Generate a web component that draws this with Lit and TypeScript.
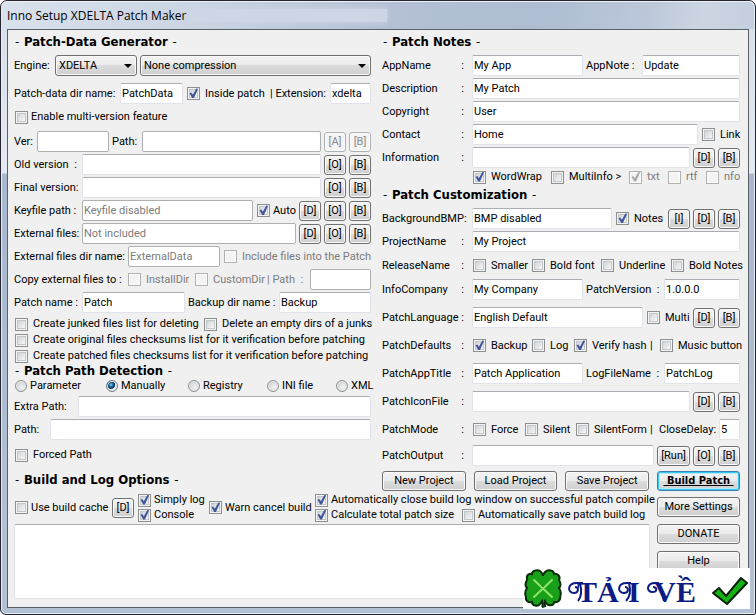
import { LitElement, html, css, nothing } from "lit";
import { customElement } from "lit/decorators.js";

interface Opts {
  on?: boolean;
  off?: boolean;
}

const check = (text: string, o: Opts = {}) => html`<label class="check ${o.off ? "dim" : ""}"
  ><input type="checkbox" .checked=${!!o.on} ?disabled=${!!o.off} /><span>${text}</span></label
>`;

const radio = (text: string, on = false) => html`<label class="check radio"
  ><input type="radio" name="detection" .checked=${on} /><span>${text}</span></label
>`;

const label = (id: string, text: string, dim = false) =>
  html`<label class="label ${dim ? "dim" : ""}" for=${id}>${text}</label>`;

const key = (text: string, id?: string) =>
  id
    ? html`<label class="key" for=${id}><span>${text}</span><span>:</span></label>`
    : html`<span class="key"><span>${text}</span><span>:</span></span>`;

const field = (id: string, value = "", off = false) =>
  html`<input class="field" type="text" id=${id} .value=${value} ?disabled=${off} />`;

const btn = (text: string, off = false) =>
  html`<button class="btn" type="button" ?disabled=${off}>${text}</button>`;

const heading = (text: string) => html`<h2>- <b>${text}</b> -</h2>`;

const select = (id: string, value: string, aria?: string) => html`<span class="select"
  ><select id=${id} aria-label=${aria ?? nothing}>
    <option>${value}</option>
  </select></span
>`;

@customElement("app-root")
export class AppRoot extends LitElement {
  static styles = css`
    :host {
      display: block;
      font: 11px/14px Roboto, "DejaVu Sans Condensed", sans-serif;
      color: #000;
    }
    * {
      box-sizing: border-box;
    }
    .window {
      position: relative;
      min-height: 100vh;
      display: flex;
      flex-direction: column;
      padding: 0 6px 6px;
      border: 1px solid #26242e;
      border-radius: 7px 7px 2px 6px;
      background: linear-gradient(#d6deea 0, #e4e9f1 172px, #a9b8cf 173px, #b4c1d5 100%);
      box-shadow: inset 0 0 0 1px #e6ecf4;
    }
    .title {
      height: 28px;
      margin: 0 -5px;
      padding: 0 5px;
      display: flex;
      align-items: center;
      border-top: 1px solid #eef2f7;
      border-radius: 6px 6px 0 0;
      background: linear-gradient(100deg, #d9e1ec 0, #cbd5e3 25%, #b3c0d5 52%, #aebdd3 72%, #bcc8da 86%, #cdd5e2 93%, #c3cede 100%);
    }
    h1 {
      margin: 0;
      font: 12px/16px "Open Sans", "Noto Sans", sans-serif;
      white-space: nowrap;
    }
    .smudge {
      width: 198px;
      height: 13px;
      margin-left: 2px;
      background: #ccd6e4;
      box-shadow: 0 0 6px #ccd6e4;
    }
    .client {
      flex: 1;
      display: flex;
      flex-direction: column;
      gap: 0;
      padding: 5px 8px 8px 6px;
      border: 1px solid #5a6066;
      background: #f0f0f0;
    }
    .columns {
      display: grid;
      grid-template-columns: 357fr 358fr;
      column-gap: 11px;
    }
    .col {
      min-width: 0;
      display: flex;
      flex-direction: column;
    }
    h2 {
      margin: 0;
      padding-left: 1px;
      font: 13px/14px "DejaVu Sans Condensed", "DejaVu Sans", sans-serif;
      white-space: nowrap;
    }
    h2 b {
      padding: 0 1px;
    }
    .row {
      display: grid;
      column-gap: 3px;
      height: 23px;
      align-items: center;
    }
    .slim {
      height: 16px;
    }
    .t1 { margin-top: 1px; }
    .t2 { margin-top: 2px; }
    .t3 { margin-top: 3px; }
    .t4 { margin-top: 4px; }
    .t5 { margin-top: 5px; }
    .t6 { margin-top: 6px; }
    .t10 { margin-top: 10px; }

    .engine { grid-template-columns: 38px 82px 1fr; }
    .data { grid-template-columns: 103px 63px 81px 1fr 41px; }
    .ver { grid-template-columns: 20px 72px 27px 1fr 22px 22px; }
    .path2 { grid-template-columns: 65px 1fr 22px 22px; }
    .keyfile { grid-template-columns: 65px 1fr 40px 22px 22px 22px; }
    .path3 { grid-template-columns: 65px 1fr 22px 22px 22px; }
    .extdir { grid-template-columns: 111px 92px 1fr; }
    .copy { grid-template-columns: 110px 64px 70px 1fr 61px; }
    .name { grid-template-columns: 65px 103px 1fr 92px; }
    .junk { grid-template-columns: 186px 1fr; }
    .radios { grid-template-columns: 88px 79px 76px 66px 1fr; }
    .extra { grid-template-columns: 61px 1fr; }
    .path { grid-template-columns: 33px 1fr; }

    .app { grid-template-columns: 87px 1fr 53px 98px; }
    .wide { grid-template-columns: 87px 1fr; }
    .contact { grid-template-columns: 87px 1fr 39px; }
    .info { grid-template-columns: 87px 1fr 22px 22px; }
    .wrap { grid-template-columns: 87px 75px 75px 36px 35px 1fr; }
    .bmp { grid-template-columns: 87px 1fr 50px 22px 22px 22px; }
    .release { grid-template-columns: 87px 56px 66px 67px 1fr; }
    .pair { grid-template-columns: 87px 1fr 75px 76px; }
    .lang { grid-template-columns: 87px 1fr 44px 22px 22px; }
    .defaults { grid-template-columns: 87px 56px 39px 74px 6px 1fr; }
    .mode { grid-template-columns: 87px 49px 48px 72px 6px 57px 1fr; }
    .output { grid-template-columns: 87px 1fr 33px 22px 22px; }
    .actions { grid-template-columns: repeat(3, 1fr) 83px; column-gap: 8px; }

    .label, .key, .check {
      white-space: pre;
      min-width: 0;
    }
    .key {
      display: flex;
      justify-content: space-between;
      padding-right: 5px;
    }
    .check {
      display: flex;
      align-items: center;
      gap: 5px;
      padding-left: 1px;
    }
    .tight .check, .radio, .keyfile .check {
      gap: 3px;
    }
    .dim {
      color: #7b7b7b;
    }
    .check input {
      appearance: none;
      flex: none;
      width: 13px;
      height: 13px;
      margin: 0;
      border: 1px solid #8e8f8f;
      background: linear-gradient(135deg, #c4c9d0, #f6f6f6 80%);
      box-shadow: inset 0 0 0 1px #f4f4f4, inset 0 0 0 2px #c3c6ca;
    }
    .check input:disabled {
      border-color: #b1b1b1;
      background: #f4f4f4;
      box-shadow: inset 0 0 0 1px #fbfbfb;
    }
    .check input[type="checkbox"]:checked::before {
      content: "";
      display: block;
      width: 11px;
      height: 11px;
      background: #42569a;
      clip-path: polygon(14% 48%, 30% 42%, 44% 62%, 76% 4%, 92% 6%, 54% 92%, 38% 92%);
    }
    .check input:disabled:checked::before {
      background: #a9a9a9;
    }
    .check.radio input {
      width: 12px;
      height: 12px;
      border-radius: 50%;
      background: radial-gradient(circle at 60% 60%, #f4f4f4 0, #c6c9cd 80%);
      box-shadow: inset 0 0 0 1px #f0f0f0;
    }
    .check.radio input:checked {
      border-color: #6f7c88;
      background: radial-gradient(circle at 40% 38%, #8fd8f5 0, #1d6ea8 22%, #0d2f56 42%, #dfe6ec 52%);
    }
    .field {
      width: 100%;
      min-width: 0;
      height: 21px;
      margin: 0;
      padding: 0 1px;
      border: 1px solid #e2e3ea;
      border-top-color: #abadb3;
      border-radius: 2px;
      background: #fff;
      font: inherit;
      color: #000;
      outline: none;
    }
    .field:disabled {
      border-color: #afafaf;
      color: #7b7b7b;
    }
    .btn, select {
      font: inherit;
      color: #000;
      border: 1px solid #707070;
      border-radius: 3px;
      background: linear-gradient(#f3f3f3, #ebebeb 49%, #dcdcdc 50%, #cfcfcf);
      box-shadow: inset 0 0 0 1px #fafafa;
    }
    .btn {
      width: 100%;
      height: 20px;
      margin: 0;
      padding: 0;
      white-space: nowrap;
    }
    .btn:disabled {
      color: #8a8a8a;
      border-color: #adb2b5;
      background: #f4f4f4;
    }
    .btn.primary {
      font-family: "DejaVu Sans Condensed", "DejaVu Sans", sans-serif;
      font-weight: 700;
      text-decoration: underline;
      white-space: pre;
      border-color: #3c7fb1;
      box-shadow: inset 0 0 0 1px #35c8f2, inset 0 0 0 2px #b8e8f6;
    }
    .select {
      position: relative;
      display: block;
    }
    .select::after {
      content: "";
      position: absolute;
      right: 5px;
      top: 9px;
      border: 4px solid transparent;
      border-top-color: #000;
      border-bottom-width: 0;
      pointer-events: none;
    }
    select {
      appearance: none;
      display: block;
      width: 100%;
      height: 21px;
      margin: 0;
      padding: 0 3px;
    }
    .lower {
      flex: 1;
      display: grid;
      grid-template-columns: 1fr 83px;
      column-gap: 7px;
    }
    .log {
      min-width: 0;
      display: flex;
      flex-direction: column;
      gap: 1px;
    }
    .options {
      display: grid;
      grid-template-columns: 95px 22px 68px 103px 1fr;
      column-gap: 3px;
      align-items: center;
      height: 31px;
    }
    .stack {
      display: grid;
      grid-auto-rows: 15px;
      align-items: center;
    }
    .options .check {
      gap: 3px;
    }
    .total {
      display: grid;
      grid-template-columns: 144px 1fr;
      column-gap: 3px;
    }
    textarea {
      flex: 1;
      width: 100%;
      min-height: 75px;
      margin: 0;
      padding: 2px;
      border: 1px solid #e2e3ea;
      border-top-color: #abadb3;
      border-radius: 2px;
      background: #fff;
      font: inherit;
      resize: none;
      outline: none;
    }
    .side {
      display: flex;
      flex-direction: column;
      gap: 7px;
      padding-top: 5px;
    }
    .stamp {
      position: absolute;
      right: 5px;
      bottom: 5px;
      width: 227px;
      height: 41px;
      background: #fff;
    }
    .stamp svg {
      display: block;
    }
    .stamp text {
      font: 700 30px "Liberation Serif", serif;
      fill: #0c1c84;
    }
  `;

  render() {
    return html`
      <div class="window">
        <header class="title">
          <h1>Inno Setup XDELTA Patch Maker</h1>
          <span class="smudge"></span>
        </header>
        <main class="client">
          <div class="columns">
            <section class="col">
              ${heading("Patch-Data Generator")}
              <div class="row t5 engine">
                ${label("engine", "Engine:")}${select("engine", "XDELTA")}${select("comp", "None compression", "Compression")}
              </div>
              <div class="row t5 data">
                ${label("dir", "Patch-data dir name:")}${field("dir", "PatchData")}${check("Inside patch", { on: true })}${label("ext", "| Extension:")}${field("ext", "xdelta")}
              </div>
              <div class="row slim t4 tight">${check("Enable multi-version feature")}</div>
              <div class="row t5 ver">
                ${label("ver", "Ver:")}${field("ver", "", true)}${label("vpath", "Path:")}${field("vpath", "", true)}${btn("[A]", true)}${btn("[B]", true)}
              </div>
              <div class="row path2">${label("old", "Old version  :")}${field("old")}${btn("[O]")}${btn("[B]")}</div>
              <div class="row path2">${label("final", "Final version:")}${field("final")}${btn("[O]")}${btn("[B]")}</div>
              <div class="row keyfile">
                ${label("keyfile", "Keyfile path :")}${field("keyfile", "Keyfile disabled", true)}${check("Auto", { on: true })}${btn("[D]")}${btn("[O]")}${btn("[B]")}
              </div>
              <div class="row path3">
                ${label("files", "External files:")}${field("files", "Not included", true)}${btn("[D]")}${btn("[O]")}${btn("[B]")}
              </div>
              <div class="row extdir">
                ${label("extdir", "External files dir name:")}${field("extdir", "ExternalData", true)}${check("Include files into the Patch", { off: true })}
              </div>
              <div class="row copy">
                <span class="label">Copy external files to :</span>${check("InstallDir", { off: true })}${check("CustomDir", { off: true })}${label("cpath", "| Path  :", true)}${field("cpath", "", true)}
              </div>
              <div class="row name">
                ${label("pname", "Patch name :")}${field("pname", "Patch")}${label("bname", "Backup dir name :")}${field("bname", "Backup")}
              </div>
              <div class="row slim t2 junk">
                ${check("Create junked files list for deleting")}${check("Delete an empty dirs of a junks")}
              </div>
              <div class="row slim">${check("Create original files checksums list for it verification before patching")}</div>
              <div class="row slim">${check("Create patched files checksums list for it verification before patching")}</div>
              ${heading("Patch Path Detection")}
              <div class="row slim radios">
                ${radio("Parameter")}${radio("Manually", true)}${radio("Registry")}${radio("INI file")}${radio("XML")}
              </div>
              <div class="row t1 extra">${label("extra", "Extra Path:")}${field("extra")}</div>
              <div class="row path">${label("path", "Path:")}${field("path")}</div>
              <div class="row slim t6">${check("Forced Path")}</div>
              <div class="t10">${heading("Build and Log Options")}</div>
            </section>
            <section class="col">
              ${heading("Patch Notes")}
              <div class="row t5 app">
                ${key("AppName", "app")}${field("app", "My App")}${label("note", "AppNote :")}${field("note", "Update")}
              </div>
              <div class="row wide">${key("Description", "desc")}${field("desc", "My Patch")}</div>
              <div class="row wide">${key("Copyright", "copy")}${field("copy", "User")}</div>
              <div class="row contact">${key("Contact", "contact")}${field("contact", "Home")}${check("Link")}</div>
              <div class="row info">${key("Information", "info")}${field("info")}${btn("[D]")}${btn("[B]")}</div>
              <div class="row slim wrap">
                <span></span>${check("WordWrap", { on: true })}${check("MultiInfo >")}${check("txt", { on: true, off: true })}${check("rtf", { off: true })}${check("nfo", { off: true })}
              </div>
              <div class="t3">${heading("Patch Customization")}</div>
              <div class="row t5 bmp">
                ${key("BackgroundBMP", "bmp")}${field("bmp", "BMP disabled")}${check("Notes", { on: true })}${btn("[I]")}${btn("[D]")}${btn("[B]")}
              </div>
              <div class="row wide">${key("ProjectName", "project")}${field("project", "My Project")}</div>
              <div class="row t1 release">
                ${key("ReleaseName")}${check("Smaller")}${check("Bold font")}${check("Underline")}${check("Bold Notes")}
              </div>
              <div class="row t1 pair">
                ${key("InfoCompany", "company")}${field("company", "My Company")}${label("version", "PatchVersion  :")}${field("version", "1.0.0.0")}
              </div>
              <div class="row t5 lang">
                ${key("PatchLanguage", "lang")}${field("lang", "English Default")}${check("Multi")}${btn("[D]")}${btn("[B]")}
              </div>
              <div class="row t5 defaults">
                ${key("PatchDefaults")}${check("Backup", { on: true })}${check("Log")}${check("Verify hash", { on: true })}<span>|</span>${check("Music button")}
              </div>
              <div class="row t5 pair">
                ${key("PatchAppTitle", "title")}${field("title", "Patch Application")}${label("logname", "LogFileName  :")}${field("logname", "PatchLog")}
              </div>
              <div class="row t5 info">${key("PatchIconFile", "icon")}${field("icon")}${btn("[D]")}${btn("[B]")}</div>
              <div class="row t5 mode">
                ${key("PatchMode")}${check("Force")}${check("Silent")}${check("SilentForm")}<span>|</span>${label("delay", "CloseDelay:")}${field("delay", "5")}
              </div>
              <div class="row t3 output">
                ${key("PatchOutput", "output")}${field("output")}${btn("[Run]")}${btn("[O]")}${btn("[B]")}
              </div>
              <div class="row t2 actions">
                ${btn("New Project")}${btn("Load Project")}${btn("Save Project")}
                <button class="btn primary" type="button"> Build Patch </button>
              </div>
            </section>
          </div>
          <div class="lower">
            <section class="log">
              <div class="options">
                ${check("Use build cache")}${btn("[D]")}
                <div class="stack">${check("Simply log", { on: true })}${check("Console", { on: true })}</div>
                ${check("Warn cancel build", { on: true })}
                <div class="stack">
                  ${check("Automatically close build log window on successful patch compile", { on: true })}
                  <div class="total">
                    ${check("Calculate total patch size", { on: true })}${check("Automatically save patch build log")}
                  </div>
                </div>
              </div>
              <textarea aria-label="Build log"></textarea>
            </section>
            <div class="side">${btn("More Settings")}${btn("DONATE")}${btn("Help")}</div>
          </div>
        </main>
        <div class="stamp">
          <svg width="227" height="41" viewBox="0 0 227 41">
            <g fill="#18a018" stroke="#0a2a0a" stroke-width="2">
              <path d="M20 20C16 14 6 18 4 11C3 7 7 5 9 6C9 2 16 1 18 4Q20 6 20 8Q20 6 22 4C25 1 31 2 31 6C34 5 38 8 36 12C35 17 26 14 20 20Z" />
              <path d="M20 20C14 26 4 23 3 29C2 33 6 35 9 34C9 38 15 39 17 36L19 33Q20 38 19 39L22 38Q21 35 22 33C24 39 31 38 31 34C35 35 38 32 37 28C35 22 26 26 20 20Z" />
              <path d="M4 12Q1 17 4 20Q1 24 3 29L12 30L20 20L12 12Z" stroke="none" />
              <path d="M36 12Q39 17 36 20Q39 24 37 29L28 30L20 20L28 12Z" stroke="none" />
              <path d="M4 12Q1 17 4 20Q1 24 3 29M36 12Q39 17 36 20Q39 24 37 29" fill="none" />
            </g>
            <path d="M11 12L29 29M29 12L11 29" stroke="#8ee66c" stroke-width="2" fill="none" stroke-linecap="round" />
            <text y="34"><tspan x="54">T</tspan><tspan x="74">Ả</tspan><tspan x="105">I</tspan><tspan x="131">V</tspan><tspan x="153">Ề</tspan></text>
            <g fill="none" stroke="#0c1c84" stroke-width="2">
              <path d="M60 15H54C44 15 44 25 51 25C56 25 56 19 52 19M57 15Q60 27 55 33" />
              <path d="M108 15H104C94 15 94 25 101 25C106 25 106 19 102 19M106 15Q109 27 103 33" />
              <path d="M136 15H134C123 14 123 24 129 24C135 24 134 19 130 19M134 15Q139 23 141 33" />
            </g>
            <path d="M190 25L196 20L203 28L218 10L224 15L204 36Z" fill="#12b312" stroke="#0b1f0b" stroke-width="2" stroke-linejoin="round" />
          </svg>
        </div>
      </div>
    `;
  }
}
